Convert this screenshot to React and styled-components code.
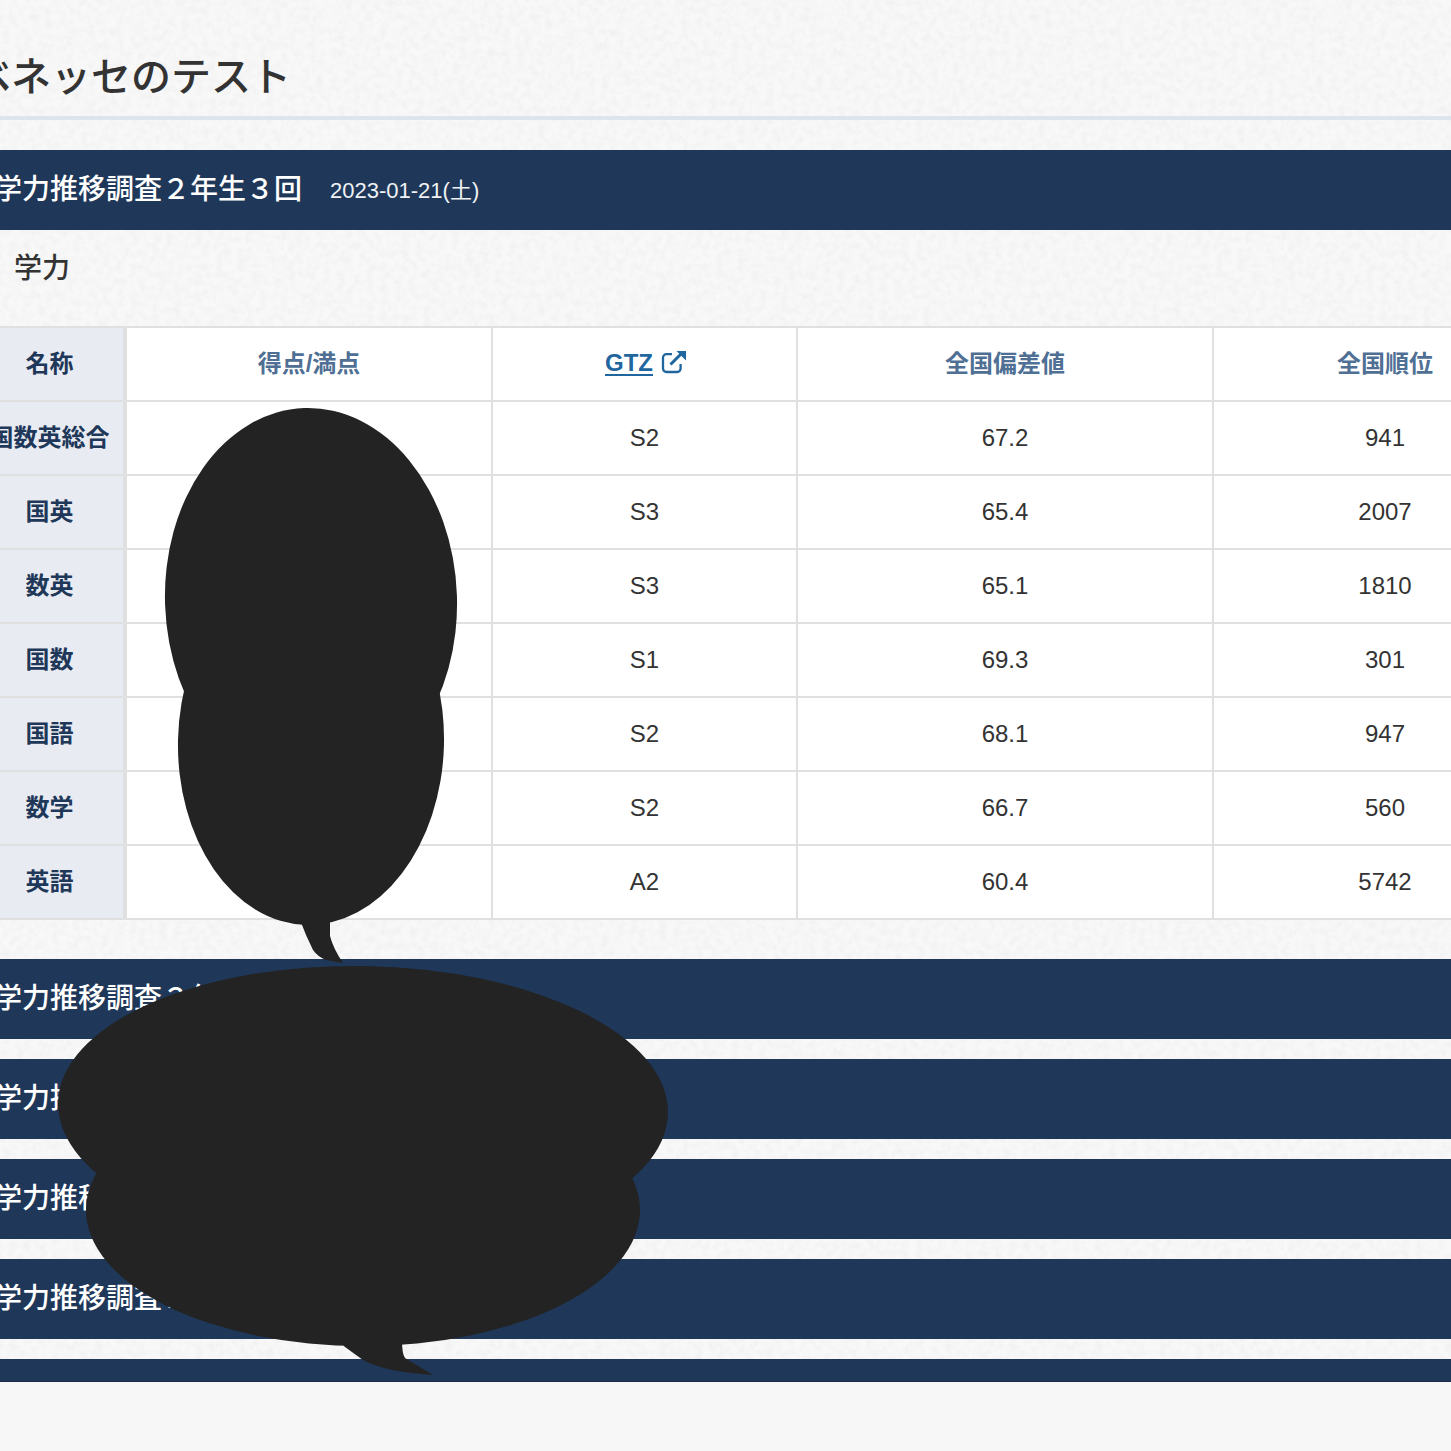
import styled, { createGlobalStyle } from "styled-components";

const noise = `url("data:image/svg+xml,%3Csvg xmlns='http://www.w3.org/2000/svg' width='500' height='500'%3E%3Cfilter id='n'%3E%3CfeTurbulence type='fractalNoise' baseFrequency='0.14' numOctaves='4' stitchTiles='stitch'/%3E%3CfeColorMatrix values='0 0 0 0 0 0 0 0 0 0 0 0 0 0 0 0 0 0 0.5 -0.2'/%3E%3C/filter%3E%3Crect width='500' height='500' filter='url(%23n)' opacity='.11'/%3E%3C/svg%3E")`;

const GlobalStyle = createGlobalStyle`
    html, body {
        margin: 0;
        padding: 0;
        background: #f7f7f7;
    }
    * {
        box-sizing: border-box;
    }
`;

const rows = [
    { name: "国数英総合", gtz: "S2", dev: "67.2", rank: "941" },
    { name: "国英", gtz: "S3", dev: "65.4", rank: "2007" },
    { name: "数英", gtz: "S3", dev: "65.1", rank: "1810" },
    { name: "国数", gtz: "S1", dev: "69.3", rank: "301" },
    { name: "国語", gtz: "S2", dev: "68.1", rank: "947" },
    { name: "数学", gtz: "S2", dev: "66.7", rank: "560" },
    { name: "英語", gtz: "A2", dev: "60.4", rank: "5742" },
];

const closedTests = [
    "学力推移調査２年生２回",
    "学力推移調査２年生１回",
    "学力推移調査１年生３回",
    "学力推移調査１年生２回",
];

function ExternalIcon() {
    return (
        <LinkIcon viewBox="0 0 26 24" aria-hidden="true">
            <path
                d="M11 4.2H5.4a3.4 3.4 0 0 0-3.4 3.4v11a3.4 3.4 0 0 0 3.4 3.4h10.8a3.4 3.4 0 0 0 3.4-3.4V14"
                fill="none"
                stroke="currentColor"
                strokeWidth="2.3"
            />
            <path d="M9.5 14.5 20 4" fill="none" stroke="currentColor" strokeWidth="3" />
            <path d="M15.5 1H25V10.5Z" fill="currentColor" />
        </LinkIcon>
    );
}

function App() {
    return (
        <Screen>
            <GlobalStyle />
            <Page>
                <Title>ベネッセのテスト</Title>
                <TestBar>
                    <TestName>学力推移調査２年生３回</TestName>
                    <TestDate>2023-01-21(土)</TestDate>
                </TestBar>
                <SectionName>学力</SectionName>
                <ScoreTable>
                    <colgroup>
                        <col width="151" />
                        <col width="367" />
                        <col width="305" />
                        <col width="416" />
                        <col width="344" />
                    </colgroup>
                    <thead>
                        <tr>
                            <NameCell as="th">名称</NameCell>
                            <HeadCell>得点/満点</HeadCell>
                            <LinkCell>
                                <GtzLink href="#gtz">GTZ</GtzLink>
                                <ExternalIcon />
                            </LinkCell>
                            <HeadCell>全国偏差値</HeadCell>
                            <HeadCell>全国順位</HeadCell>
                        </tr>
                    </thead>
                    <tbody>
                        {rows.map((row) => (
                            <tr key={row.name}>
                                <NameCell>{row.name}</NameCell>
                                <ValueCell />
                                <ValueCell>{row.gtz}</ValueCell>
                                <ValueCell>{row.dev}</ValueCell>
                                <ValueCell>{row.rank}</ValueCell>
                            </tr>
                        ))}
                    </tbody>
                </ScoreTable>
                <ClosedList>
                    {closedTests.map((name) => (
                        <TestBar key={name}>
                            <TestName>{name}</TestName>
                        </TestBar>
                    ))}
                    <TestBar $cut />
                </ClosedList>
            </Page>
            <Masks viewBox="0 0 1451 1451" aria-hidden="true">
                <g fill="#232323">
                    <ellipse cx="311" cy="600" rx="146" ry="192" transform="rotate(-2 311 600)" />
                    <ellipse cx="311" cy="742" rx="133" ry="183" transform="rotate(1.5 311 742)" />
                    <path d="M300 920 Q306 936 313 950 Q318 957 326 960 L343 963 Q333 948 330 936 L330 918Z" />
                    <ellipse cx="363" cy="1108" rx="305" ry="142" transform="rotate(1 363 1108)" />
                    <ellipse cx="363" cy="1210" rx="277" ry="136" />
                    <path d="M340 1342 L345 1347 L363 1360 Q385 1372 433 1375 L405 1358 Q402 1354 402 1340Z" />
                </g>
            </Masks>
        </Screen>
    );
}

const Screen = styled.div`
    position: relative;
    width: 1451px;
    height: 1451px;
    overflow: hidden;
    background: #f7f7f7;
    font-family: "Liberation Sans", "Noto Sans CJK JP", sans-serif;
    color: #333333;
`;

const Page = styled.main`
    width: 1583px;
    height: 1382px;
    margin-left: -26px;
    padding-top: 57px;
    background-color: #f8f8f8;
    background-image: ${noise};
`;

const Title = styled.h1`
    margin: 0 0 30px -26px;
    height: 63px;
    padding-left: 23px;
    font-size: 40px;
    line-height: 40px;
    font-weight: 500;
    border-bottom: 4px solid #dde4eb;
    white-space: nowrap;
`;

const TestBar = styled.section`
    display: flex;
    align-items: center;
    gap: 28px;
    height: ${({ $cut }) => ($cut ? "23px" : "80px")};
    padding-left: 20px;
    background: #1f3859;
    color: #ffffff;
    border-bottom: ${({ $cut }) => ($cut ? "1px solid #182c47" : "0")};
`;

const TestName = styled.h2`
    margin: 0;
    font-size: 28px;
    line-height: 40px;
    font-weight: 500;
    white-space: nowrap;
`;

const TestDate = styled.span`
    font-size: 22px;
    padding-bottom: 5px;
    color: #f0f2f5;
`;

const SectionName = styled.h3`
    margin: 0 0 42px;
    padding: 24px 0 0 40px;
    font-size: 28px;
    line-height: 30px;
    font-weight: 500;
`;

const ScoreTable = styled.table`
    width: 1583px;
    table-layout: fixed;
    border-collapse: collapse;
    background: #ffffff;
    font-size: 24px;

    tr {
        height: 74px;
    }
`;

const NameCell = styled.td`
    padding: 0 0 6px 2px;
    text-align: center;
    font-weight: 700;
    color: #1f3859;
    background: #e8ecf2;
    border: 2px solid #e0e0e0;
    border-left: 0;
    border-right: 4px solid #e0e0e0;
    white-space: nowrap;
`;

const HeadCell = styled.th`
    padding: 0 0 6px;
    text-align: center;
    font-weight: 700;
    color: #4f6f94;
    border: 2px solid #e0e0e0;
`;

const LinkCell = styled(HeadCell)`
    padding: 0 0 2px 3px;
`;

const ValueCell = styled.td`
    padding: 0;
    text-align: center;
    border: 2px solid #e0e0e0;
`;

const GtzLink = styled.a`
    color: #1f669f;
    text-decoration: underline;
    text-underline-offset: 3px;
`;

const LinkIcon = styled.svg`
    width: 26px;
    height: 24px;
    margin-left: 8px;
    vertical-align: -3px;
    color: #1f669f;
`;

const ClosedList = styled.div`
    display: flex;
    flex-direction: column;
    gap: 20px;
    margin-top: 39px;
`;

const Masks = styled.svg`
    position: absolute;
    top: 0;
    left: 0;
    width: 1451px;
    height: 1451px;
`;

export default App;
